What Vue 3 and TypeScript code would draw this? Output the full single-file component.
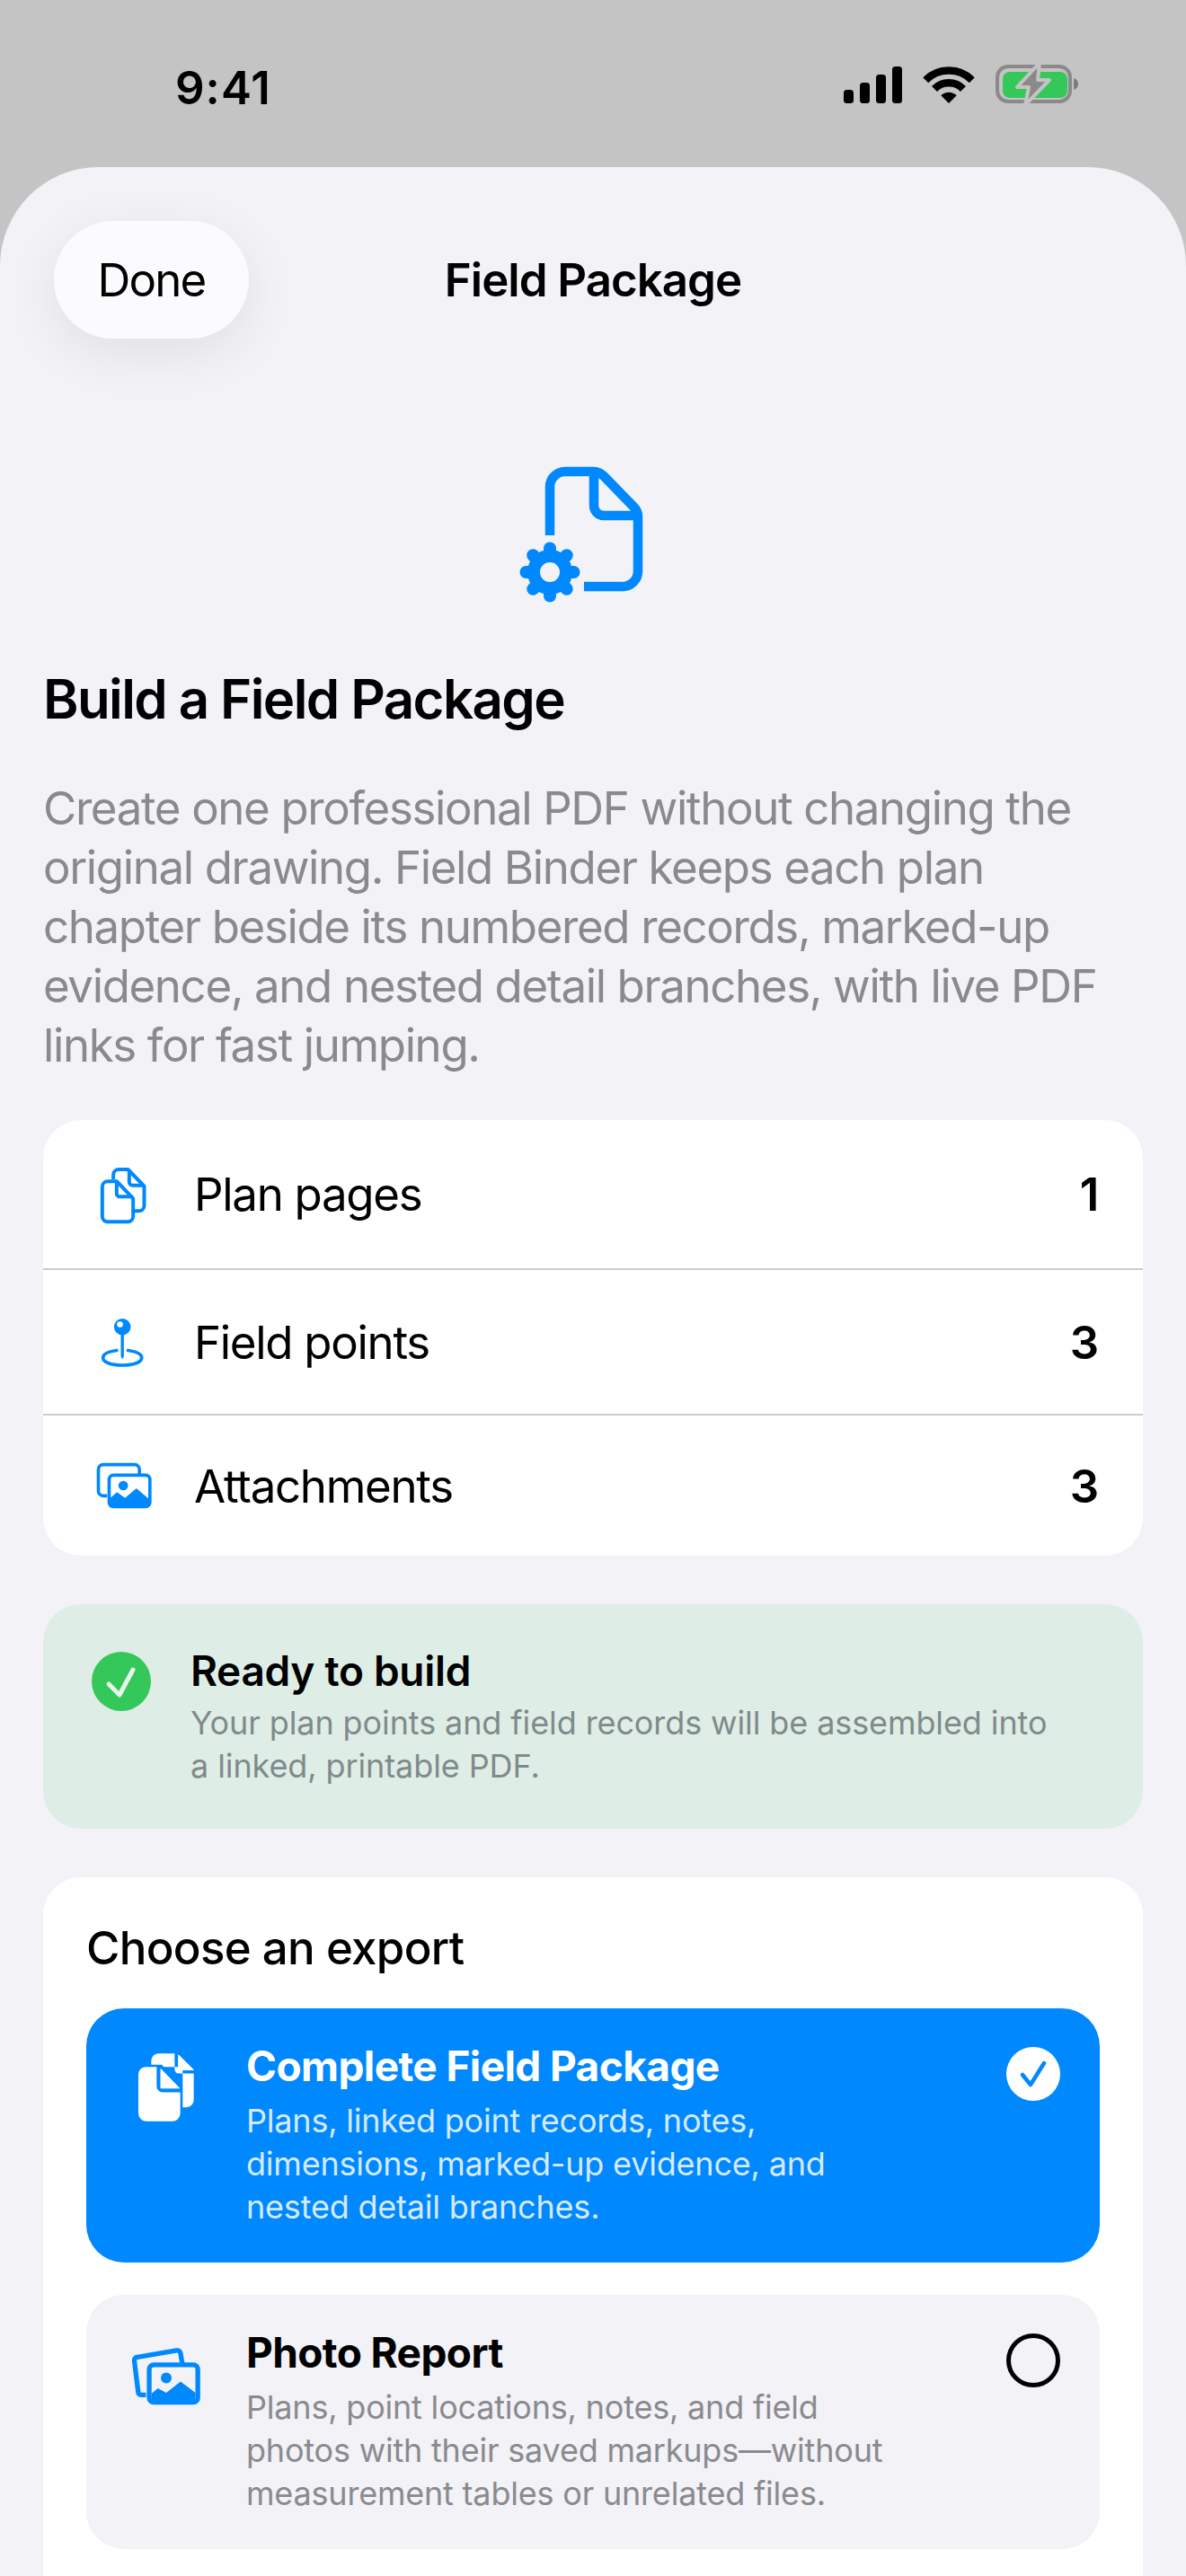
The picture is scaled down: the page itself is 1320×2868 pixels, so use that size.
<script setup lang="ts">
const gearAngles: number[] = [0, 45, 90, 135, 180, 225, 270, 315]
</script>

<template>
  <div class="page">
    <header class="status">
      <span class="time">9:41</span>
      <div class="status-icons">
        <svg class="sig" viewBox="0 0 65 41" width="65" height="41">
          <rect x="0" y="26" width="11" height="15" rx="3.5" />
          <rect x="18" y="18" width="11" height="23" rx="3.5" />
          <rect x="36" y="9" width="11" height="32" rx="3.5" />
          <rect x="54" y="0" width="11" height="41" rx="3.5" />
        </svg>
        <svg class="wifi" viewBox="0 0 58 41" width="58" height="41">
          <path d="M3.2 15.2A36.5 36.5 0 0 1 54.8 15.2" fill="none" stroke="#000" stroke-width="8.4" />
          <path d="M13 25A22.5 22.5 0 0 1 45 25" fill="none" stroke="#000" stroke-width="8.4" />
          <path d="M29 41L20.3 32.3A12.3 12.3 0 0 1 37.7 32.3Z" fill="#000" />
        </svg>
        <svg class="batt" viewBox="0 0 94 50" width="94" height="50">
          <rect x="2" y="6" width="81" height="39" rx="12" fill="none" stroke="#8a8a8a" stroke-width="4" />
          <rect x="8" y="12" width="72" height="29" rx="8" fill="#34c759" />
          <path d="M87 19C90 20 92 22 92 25.500C92 29 90 31 87 32Z" fill="#7d7d7d" />
          <path d="M49 2L24 29H37L33 49L60 21H47Z" fill="#8a8a8a" stroke="#c4c4c4" stroke-width="4" stroke-linejoin="round" />
        </svg>
      </div>
    </header>

    <main class="sheet">
      <div class="nav">
        <button class="done">Done</button>
        <h1 class="nav-title">Field Package</h1>
      </div>

      <div class="hero">
        <svg viewBox="0 0 200 200" width="200" height="200">
          <g fill="none" stroke="#0088ff" stroke-width="10.500">
            <path d="M72 106V52A17 17 0 0 1 89 35H121C125 35 129 37 132 40L165 74C168 77 170 81 170 85V146A17 17 0 0 1 153 163H110" />
            <path d="M121 35V73A11 11 0 0 0 132 84H170" />
            <circle cx="72" cy="147" r="18" stroke-width="14" />
          </g>
          <g stroke="#0088ff" stroke-width="14" stroke-linecap="round">
            <line v-for="a in gearAngles" :key="a" x1="72" y1="125" x2="72" y2="120.500" :transform="`rotate(${a} 72 147)`" />
          </g>
        </svg>
      </div>

      <h2 class="heading">Build a Field Package</h2>
      <p class="lead">Create one professional PDF without changing the original drawing. Field Binder keeps each plan chapter beside its numbered records, marked-up evidence, and nested detail branches, with live PDF links for fast jumping.</p>

      <section class="stats">
        <div class="stat">
          <span class="stat-icon">
            <svg viewBox="200 160 200 210" width="67" height="70">
              <g fill="none" stroke="#0088ff" stroke-width="12" stroke-linejoin="round">
                <path d="M263 214V199A18 18 0 0 1 281 181H312L366 237V302A18 18 0 0 1 348 320H333" />
                <path d="M316 183V224A10 10 0 0 0 326 234H365" />
                <path d="M226 239A18 18 0 0 1 244 221H275L329 278V338A18 18 0 0 1 311 356H244A18 18 0 0 1 226 338Z" />
                <path d="M274 222V262A10 10 0 0 0 284 272H328" />
              </g>
            </svg>
          </span>
          <span class="stat-label">Plan pages</span>
          <span class="stat-num">1</span>
        </div>
        <div class="stat">
          <span class="stat-icon">
            <svg viewBox="200 670 200 190" width="67" height="63">
              <path d="M274 792C244 796 228 805 228 817C228 832 256 842 293 842C330 842 358 832 358 817C358 805 342 796 312 792" fill="none" stroke="#0088ff" stroke-width="11" stroke-linecap="round" />
              <path d="M288 735H298V812L293 822L288 812Z" fill="#0088ff" />
              <circle cx="293" cy="713" r="28" fill="#0088ff" />
              <circle cx="285" cy="705" r="10" fill="#fff" />
            </svg>
          </span>
          <span class="stat-label">Field points</span>
          <span class="stat-num">3</span>
        </div>
        <div class="stat">
          <span class="stat-icon">
            <svg viewBox="195 1160 200 165" width="67" height="55">
              <g fill="none" stroke="#0088ff" stroke-width="11">
                <path d="M237 1275H224A16 16 0 0 1 208 1259V1187A16 16 0 0 1 224 1171H329A16 16 0 0 1 345 1187V1205" />
                <rect x="244" y="1206" width="136" height="105" rx="14" />
              </g>
              <circle cx="291" cy="1241" r="16" fill="#0088ff" />
              <path d="M248 1282L270 1263L297 1282L335 1250L376 1285V1312H244Z" fill="#0088ff" />
            </svg>
          </span>
          <span class="stat-label">Attachments</span>
          <span class="stat-num">3</span>
        </div>
      </section>

      <section class="ready">
        <svg class="ready-icon" viewBox="0 0 66 66" width="66" height="66">
          <circle cx="33" cy="33" r="33" fill="#34c759" />
          <path d="M19 36L31 48L46 20" fill="none" stroke="#e6f6ea" stroke-width="5" stroke-linecap="round" stroke-linejoin="round" />
        </svg>
        <div class="ready-text">
          <h3 class="ready-title">Ready to build</h3>
          <p class="ready-desc">Your plan points and field records will be assembled into a linked, printable PDF.</p>
        </div>
      </section>

      <section class="choose">
        <h3 class="choose-title">Choose an export</h3>

        <div class="option selected">
          <span class="opt-icon">
            <svg viewBox="170 180 240 260" width="80" height="87">
              <path d="M240 240V220A25 25 0 0 1 265 195H318V248A14 14 0 0 0 332 262H382V350A25 25 0 0 1 357 375H345V240Z" fill="#fff" />
              <path d="M331 200L381 250H331Z" fill="#fff" stroke="#fff" stroke-width="3" stroke-linejoin="round" />
              <path d="M197 265A25 25 0 0 1 222 240H272L337 308V395A27 27 0 0 1 310 422H224A27 27 0 0 1 197 395Z" fill="#0088ff" stroke="#0088ff" stroke-width="14" />
              <path d="M197 265A25 25 0 0 1 222 240H258V305A20 20 0 0 0 278 325H337V395A27 27 0 0 1 310 422H224A27 27 0 0 1 197 395Z" fill="#fff" />
              <path d="M272 247L334 311H272Z" fill="#fff" stroke="#fff" stroke-width="3" stroke-linejoin="round" />
            </svg>
          </span>
          <div class="opt-text">
            <h4 class="opt-title">Complete Field Package</h4>
            <p class="opt-desc">Plans, linked point records, notes, dimensions, marked-up evidence, and nested detail branches.</p>
          </div>
          <svg class="radio" viewBox="0 0 60 60" width="60" height="60">
            <circle cx="30" cy="30" r="30" fill="#fff" />
            <path d="M18 31L27 42L42 18" fill="none" stroke="#0088ff" stroke-width="4.500" stroke-linecap="round" stroke-linejoin="round" />
          </svg>
        </div>

        <div class="option">
          <span class="opt-icon">
            <svg viewBox="170 1170 240 205" width="80" height="68">
              <path d="M222 1337H206A11 11 0 0 1 196 1327L183 1223A11 11 0 0 1 193 1210L325 1188A11 11 0 0 1 338 1198L344 1232" fill="none" stroke="#0088ff" stroke-width="16" />
              <rect x="233" y="1236" width="163" height="126" rx="15" fill="#f2f2f7" stroke="#0088ff" stroke-width="16" />
              <circle cx="290" cy="1280" r="18" fill="#0088ff" />
              <path d="M241 1332L262 1315L290 1330L338 1292L388 1330V1362H241Z" fill="#0088ff" />
            </svg>
          </span>
          <div class="opt-text">
            <h4 class="opt-title">Photo Report</h4>
            <p class="opt-desc muted">Plans, point locations, notes, and field photos with their saved markups—without measurement tables or unrelated files.</p>
          </div>
          <svg class="radio" viewBox="0 0 60 60" width="60" height="60">
            <circle cx="30" cy="30" r="27.500" fill="none" stroke="#000" stroke-width="5" />
          </svg>
        </div>
      </section>
    </main>
  </div>
</template>

<style scoped>
.page {
  width: 1320px;
  height: 2868px;
  overflow: hidden;
  background: #c4c4c4;
  font-family: Inter, "Liberation Sans", sans-serif;
  color: #000;
}
h1, h2, h3, h4, p { margin: 0; font-weight: inherit; }

.status {
  height: 186px;
  box-sizing: border-box;
  padding: 67px 118px 0 195px;
  display: flex;
  justify-content: space-between;
  align-items: flex-start;
}
.time { font-size: 51px; font-weight: 600; line-height: 62px; letter-spacing: 1px; }
.status-icons { display: flex; align-items: flex-start; gap: 23px; margin-top: 7px; }
.sig { fill: #000; }
.batt { margin-top: -6px; }

.sheet {
  background: #f2f2f7;
  border-radius: 110px 110px 0 0;
  height: 2682px;
  padding: 60px 48px 0;
  box-sizing: border-box;
}
.nav {
  position: relative;
  height: 131px;
  display: flex;
  justify-content: center;
  align-items: center;
}
.done {
  position: absolute;
  left: 12px;
  top: 0;
  width: 217px;
  height: 131px;
  border: 0;
  border-radius: 66px;
  background: #fbfbfe;
  box-shadow: 0 16px 60px rgba(0, 0, 0, 0.08);
  font: 400 51px Inter, "Liberation Sans", sans-serif;
  letter-spacing: -1.8px;
  color: #000;
}
.nav-title { font-size: 51px; font-weight: 600; line-height: 62px; letter-spacing: -1px; }

.hero { display: flex; justify-content: flex-start; margin-top: 113px; height: 200px; padding-left: 492px; }

.heading { font-size: 60px; font-weight: 600; line-height: 72px; margin-top: 52px; letter-spacing: -1.6px; }
.lead {
  font-size: 51px;
  line-height: 66px;
  color: #8a8a8e;
  margin-top: 53px;
  letter-spacing: -1.37px;
}

.stats {
  background: #fff;
  border-radius: 42px;
  margin-top: 50px;
  overflow: hidden;
}
.stat {
  display: flex;
  align-items: center;
  padding: 0 50px 0 0;
  height: 162px;
  box-sizing: border-box;
  border-top: 2px solid #cccccf;
  font-size: 51px;
  letter-spacing: -1.3px;
}
.stat:first-child { border-top: 0; height: 165px; }
.stat:last-child { height: 158px; }
.stat-icon { width: 170px; display: flex; justify-content: center; padding-left: 14px; padding-right: 4px; box-sizing: border-box; margin-right: -2px; }
.stat-label { flex: 1; }
.stat-num { font-weight: 600; }

.ready {
  background: #deeee6;
  border-radius: 42px;
  margin-top: 54px;
  height: 250px;
  box-sizing: border-box;
  padding: 53px 60px 0 54px;
  display: flex;
  gap: 44px;
}
.ready-icon { flex: none; }
.ready-text { width: 960px; }
.ready-title { font-size: 46px; font-weight: 600; line-height: 56px; margin-top: -7px; letter-spacing: -0.3px; }
.ready-desc { font-size: 36px; line-height: 48px; color: #808a8a; margin-top: 6px; letter-spacing: -0.1px; }

.choose {
  background: #fff;
  border-radius: 42px;
  margin-top: 54px;
  padding: 48px 48px 0;
  height: 900px;
  box-sizing: border-box;
}
.choose-title { font-size: 51px; font-weight: 500; line-height: 62px; letter-spacing: -0.7px; }
.option {
  margin-top: 36px;
  height: 283px;
  border-radius: 42px;
  background: #f2f2f7;
  display: flex;
  box-sizing: border-box;
  padding: 36px 44px 0 0;
}
.option.selected { background: #0088ff; color: #fff; }
.opt-icon { width: 178px; flex: none; display: flex; justify-content: center; padding-top: 20px; box-sizing: border-box; }
.selected .opt-icon { padding-top: 9px; }
.opt-text { width: 730px; }
.opt-title { font-size: 46px; font-weight: 700; line-height: 56px; letter-spacing: -0.6px; }
.opt-desc { font-size: 36px; line-height: 48px; color: #d6eaff; margin-top: 9px; letter-spacing: -0.2px; }
.opt-desc.muted { color: #8a8a8e; }
.radio { margin-left: auto; margin-top: 7px; flex: none; }
</style>
